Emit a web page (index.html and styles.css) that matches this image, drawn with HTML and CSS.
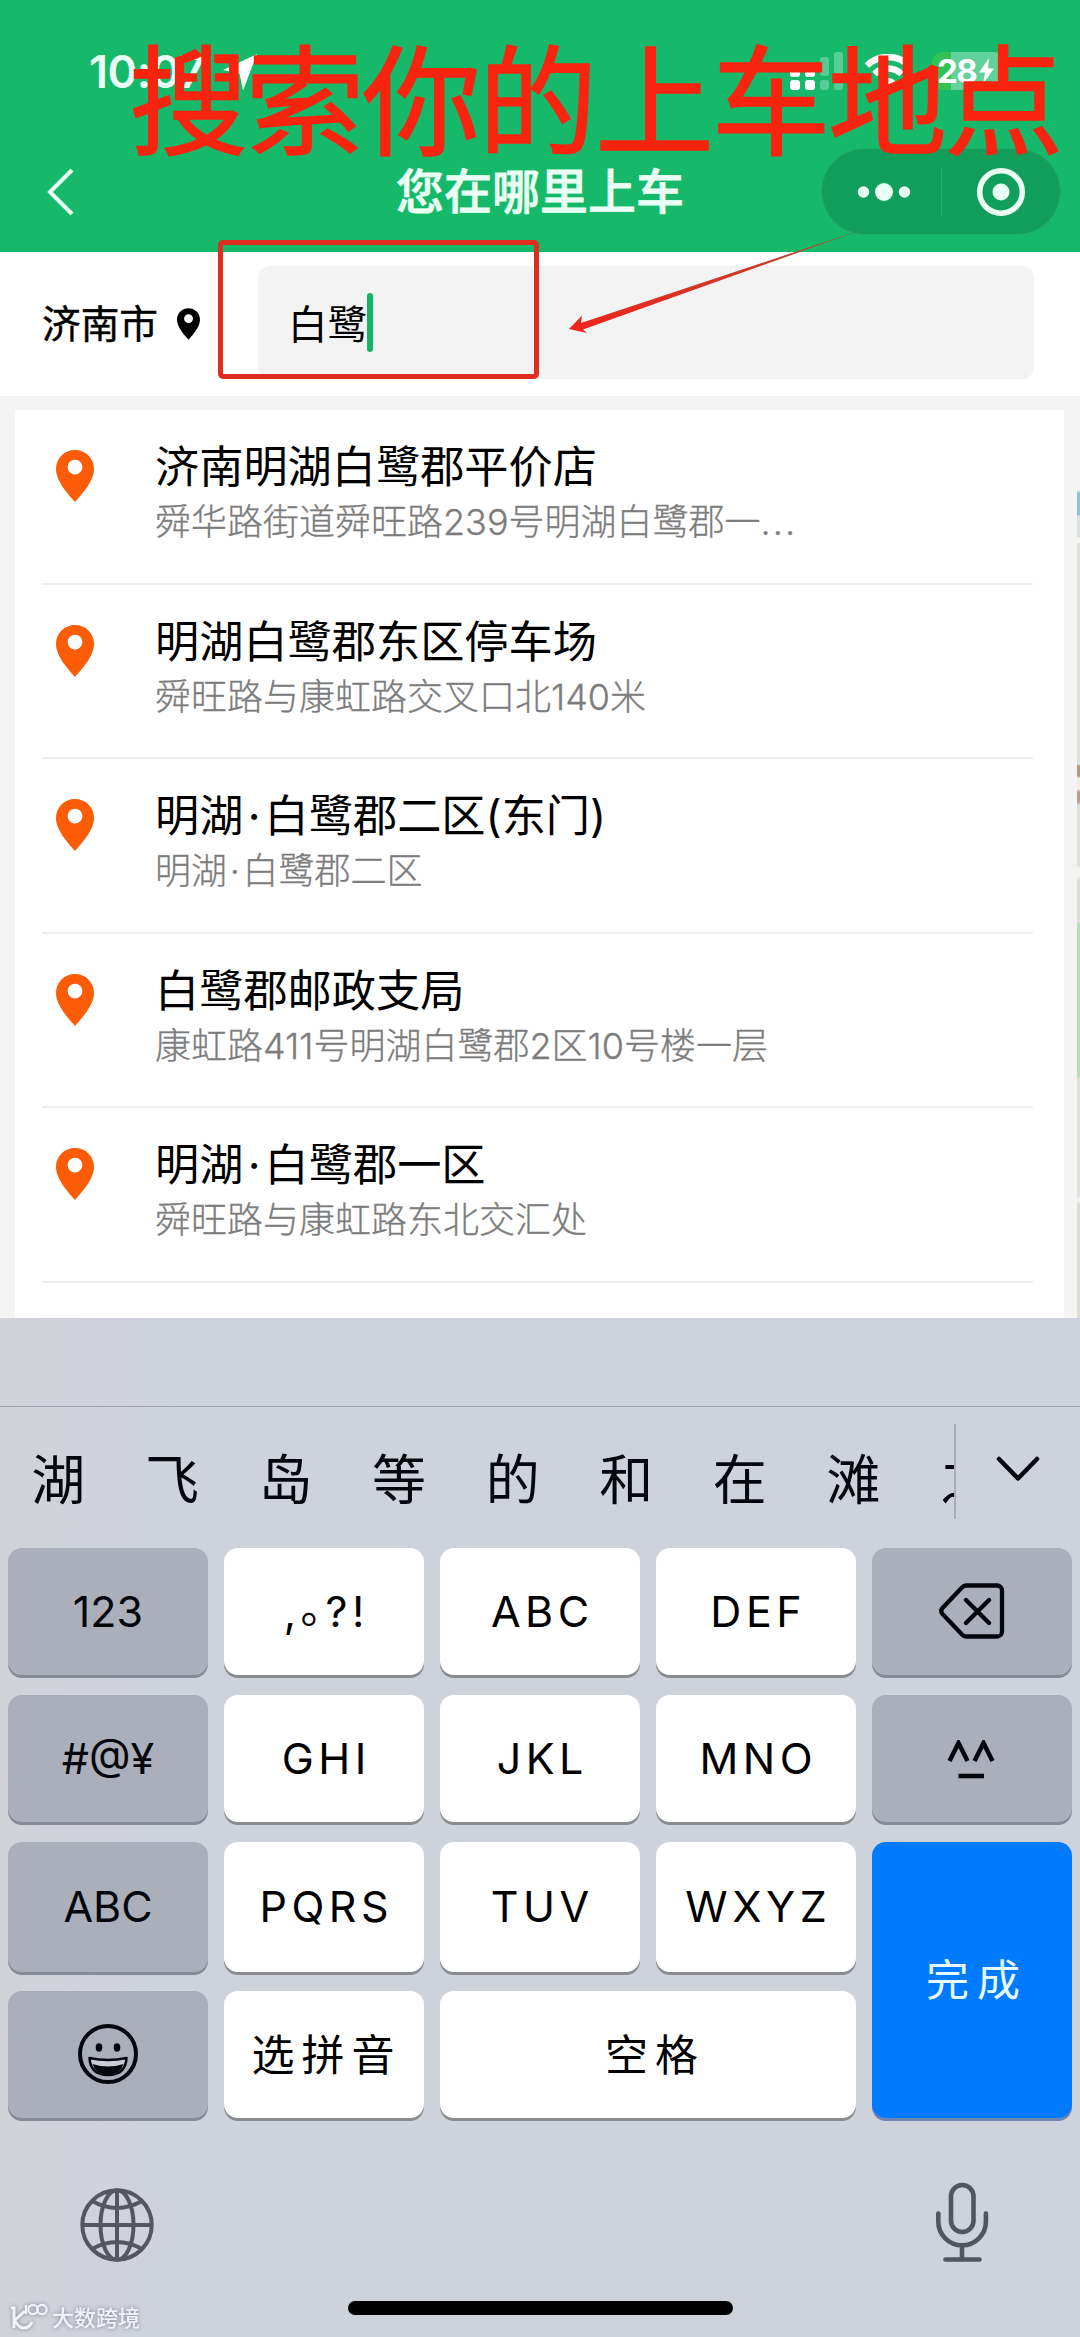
FILE: index.html
```html
<!DOCTYPE html>
<html lang="zh-CN">
<head>
<meta charset="utf-8">
<title>您在哪里上车</title>
<link rel="stylesheet" href="styles.css">
</head>
<body>
<svg class="defs" width="0" height="0">
  <symbol id="pin" viewBox="0 0 38 52">
    <path fill-rule="evenodd" d="M19 0C8.500 0 0 8 0 19c0 13 14 27 19 33 5-6 19-20 19-33C38 8 29.500 0 19 0zm0 9.700a7.400 7.400 0 1 1 0 14.800 7.400 7.400 0 0 1 0-14.800z"/>
  </symbol>
</svg>
<div class="screen">
  <header class="header">
    <div class="status">
      <span class="clock">10:07</span>
      <svg class="locate" width="34" height="37" viewBox="0 0 34 37"><path fill="#fff" d="M34 0 20 36.500 16.500 19.500 0 16z"/></svg>
      <svg class="signal" width="54" height="40" viewBox="0 0 54 40">
        <g fill="#fff"><rect y="12" width="10" height="13" rx="3"/><rect x="15" y="12" width="10" height="13" rx="3"/><rect y="28" width="10" height="10" rx="3"/><rect x="15" y="28" width="10" height="10" rx="3"/></g>
        <g fill="#fff" opacity=".28"><rect x="30" y="5" width="9" height="19" rx="3"/><rect x="44" y="0" width="9" height="23" rx="3"/><rect x="30" y="28" width="9" height="10" rx="3"/><rect x="44" y="28" width="9" height="10" rx="3"/></g>
      </svg>
      <svg class="wifi" width="46" height="36" viewBox="0 0 46 36"><g fill="none" stroke="#fff" stroke-width="6.500"><path d="M2 11.500a30 30 0 0 1 42 0"/><path d="M9.500 20a19.500 19.500 0 0 1 27 0"/></g><path fill="#fff" d="M15.500 27a11 11 0 0 1 15 0L23 35z"/></svg>
      <span class="battery">28<svg width="15" height="26" viewBox="0 0 15 26"><path fill="#fff" d="M10 0 0 14.500h6L4 26l11-15.500H9z"/></svg></span>
    </div>
    <div class="nav">
      <svg class="back" width="30" height="50" viewBox="0 0 30 50"><path d="M26 3 4 25l22 22" fill="none" stroke="#e4fff1" stroke-width="4"/></svg>
      <h1 class="title">您在哪里上车</h1>
      <div class="capsule">
        <svg width="54" height="20" viewBox="0 0 54 20" fill="#e9fff4"><circle cx="6.500" cy="10" r="5.700"/><circle cx="27" cy="10" r="9"/><circle cx="47.500" cy="10" r="5.700"/></svg>
        <i class="capsule-line"></i>
        <svg width="50" height="50" viewBox="0 0 50 50"><circle cx="25" cy="25" r="21.300" fill="none" stroke="#e9fff4" stroke-width="5.500"/><circle cx="25" cy="25" r="8.500" fill="#e9fff4"/></svg>
      </div>
    </div>
  </header>

  <div class="search">
    <span class="city">济南市</span>
    <svg class="city-pin" width="23" height="32"><use href="#pin"/></svg>
    <div class="field"><span class="query">白鹭</span><i class="caret"></i></div>
  </div>

  <main class="results">
    <ul class="list">
      <li class="row"><svg class="pin" width="38" height="52"><use href="#pin"/></svg><div><p class="name">济南明湖白鹭郡平价店</p><p class="addr">舜华路街道舜旺路<span class="num">239</span>号明湖白鹭郡一<span class="dots">...</span></p></div></li>
      <li class="row"><svg class="pin" width="38" height="52"><use href="#pin"/></svg><div><p class="name">明湖白鹭郡东区停车场</p><p class="addr">舜旺路与康虹路交叉口北140米</p></div></li>
      <li class="row"><svg class="pin" width="38" height="52"><use href="#pin"/></svg><div><p class="name">明湖<span class="mid">·</span>白鹭郡二区(东门)</p><p class="addr">明湖<span class="mid">·</span>白鹭郡二区</p></div></li>
      <li class="row"><svg class="pin" width="38" height="52"><use href="#pin"/></svg><div><p class="name">白鹭郡邮政支局</p><p class="addr">康虹路411号明湖白鹭郡2区10号楼一层</p></div></li>
      <li class="row"><svg class="pin" width="38" height="52"><use href="#pin"/></svg><div><p class="name">明湖<span class="mid">·</span>白鹭郡一区</p><p class="addr">舜旺路与康虹路东北交汇处</p></div></li>
    </ul>
    <div class="map-edge"></div>
  </main>

  <section class="keyboard">
    <div class="accessory"></div>
    <div class="candidates">
      <div class="words"><span>湖</span><span>飞</span><span>岛</span><span>等</span><span>的</span><span>和</span><span>在</span><span>滩</span><span>之</span></div>
      <svg class="expand" width="46" height="28" viewBox="0 0 46 28"><path d="M4 4 23 23.500 42 4" fill="none" stroke="#05070c" stroke-width="4.500" stroke-linecap="round" stroke-linejoin="round"/></svg>
    </div>
    <div class="keys">
      <div class="key dark">123</div>
      <div class="key wide"><span class="punct">,<span class="stop">。</span>?!</span></div>
      <div class="key wide">ABC</div>
      <div class="key wide">DEF</div>
      <div class="key dark"><svg width="66" height="56" viewBox="0 0 66 56" fill="none" stroke="#05070c" stroke-width="4.300" stroke-linecap="round" stroke-linejoin="round"><path d="M27 2.500h31a5 5 0 0 1 5 5v41a5 5 0 0 1-5 5H27q-2 0-4-2L3.500 31q-2.500-3 0-6L23 4.500q2-2 4-2zM27 17l23 23M50 17 27 40"/></svg></div>
      <div class="key dark">#@¥</div>
      <div class="key wide">GHI</div>
      <div class="key wide">JKL</div>
      <div class="key wide">MNO</div>
      <div class="key dark face"><svg width="48" height="40" viewBox="0 0 48 40"><path d="M2.500 21 11.500 3 20.500 21M27.500 21 36.500 3 45.500 21M11.500 36H37" fill="none" stroke="#05070c" stroke-width="4.500"/></svg></div>
      <div class="key dark">ABC</div>
      <div class="key wide">PQRS</div>
      <div class="key wide">TUV</div>
      <div class="key wide">WXYZ</div>
      <div class="key done">完成</div>
      <div class="key dark smile"><svg width="62" height="62" viewBox="0 0 62 62"><circle cx="31" cy="31" r="28" fill="none" stroke="#05070c" stroke-width="4"/><ellipse cx="22" cy="24.500" rx="3.300" ry="4.200" fill="#05070c"/><ellipse cx="40" cy="24.500" rx="3.300" ry="4.200" fill="#05070c"/><path d="M12.500 35q18.500 4 37 0-1 17-18.500 17T12.500 35z" fill="#c9ccd2" stroke="#05070c" stroke-width="2.600" stroke-linejoin="round"/><path d="M15.500 41q15.500 5 31 0-3 10.500-15.500 10.500T15.500 41z" fill="#05070c"/></svg></div>
      <div class="key han">选拼音</div>
      <div class="key han space">空格</div>
    </div>
    <div class="tools">
      <svg class="globe" width="76" height="76" viewBox="0 0 76 76" fill="none" stroke="#55565f" stroke-width="4"><circle cx="38" cy="38" r="34.700"/><ellipse cx="38" cy="38" rx="16.500" ry="34.700"/><path d="M38 3v70M3 38h70M13 14q25 14 50 0M13 62q25-14 50 0"/></svg>
      <svg width="54" height="80" viewBox="0 0 54 80" fill="none" stroke="#51555f" stroke-width="4.600" stroke-linecap="round"><rect x="16" y="3" width="22.500" height="47" rx="11.200"/><path d="M3.300 31.500v8a23.800 23.800 0 0 0 47.600 0v-8M27 63.500v14M10.500 77.500h34"/></svg>
    </div>
    <div class="home"></div>
    <div class="watermark">
      <svg width="38" height="28" viewBox="0 0 38 28" fill="none" stroke="#f1f3f8" stroke-width="3"><path d="M1 6h3v20M15 9 5 18q3 8 9 8 5 0 8-6"/><g stroke-width="2.200"><path d="M16 3v9"/><circle cx="23" cy="7.500" r="4.700"/><circle cx="32" cy="7.500" r="4.700"/></g></svg>
      <span>大数跨境</span>
    </div>
  </section>

  <div class="note">搜索你的上车地点</div>
  <div class="frame"></div>
  <svg class="arrow" width="310" height="120" viewBox="0 0 310 120"><defs><linearGradient id="fade" x1="0" x2="1"><stop offset="0" stop-color="#f1251b"/><stop offset=".65" stop-color="#c93a2a"/><stop offset="1" stop-color="#6d7343"/></linearGradient></defs><path fill="url(#fade)" d="M4 105 17 91.500 16 99 302 4 18 105.500 22 109z"/></svg>
</div>
</body>
</html>
```
FILE: styles.css
```css
* { box-sizing: border-box; margin: 0; padding: 0; }
body { width: 1080px; background: #fff; font-family: Inter, "Noto Sans CJK SC", sans-serif; color: #000; }
svg { display: block; flex: none; }
.defs { position: absolute; }
.screen { position: relative; width: 1080px; height: 2337px; overflow: hidden; display: flex; flex-direction: column; }

.header { height: 252px; background: #16b96a; flex: none; }
.status { height: 148px; padding: 52px 0 0 89px; display: flex; align-items: flex-start; color: #e9fff4; }
.clock { width: 134px; font-size: 45px; font-weight: 600; line-height: 40px; letter-spacing: -.5px; }
.locate { margin-top: 2px; }
.signal { margin-left: 533px; }
.wifi { margin-left: 21px; margin-top: 2px; }
.battery { margin-left: 21px; width: 73px; height: 38px; border-radius: 11px; padding-left: 5px; display: flex; align-items: center; gap: 3px; background: linear-gradient(90deg, #31c252 19px, #62d19b 19px); font-size: 33px; font-weight: 700; letter-spacing: -1.500px; color: #fff; }
.nav { height: 86px; display: grid; grid-template-columns: 310px 1fr 310px; align-items: center; }
.back { margin-left: 46px; }
.title { text-align: center; font-size: 48px; font-weight: 500; line-height: 86px; color: #e9fff4; -webkit-text-stroke: .8px #e9fff4; white-space: nowrap; }
.capsule { width: 240px; height: 87px; margin-left: 51px; border-radius: 44px; background: #119e5a; border: 1px solid #23ad6a; display: flex; align-items: center; padding: 0 34px 0 35px; }
.capsule-line { width: 2px; height: 50px; margin: 0 34px 0 30px; background: #2aac6c; }

.search { height: 144px; flex: none; margin-right: 5px; padding-left: 42px; display: flex; align-items: center; background: #fff; }
.city { font-size: 38.700px; line-height: 52px; width: 135px; -webkit-text-stroke: .4px #000; }
.city-pin { margin-top: -1px; fill: #000; }
.field { margin: 0 0 3px 58px; width: 776px; height: 113px; border-radius: 12px; background: #f3f3f3; padding-left: 30px; display: flex; align-items: center; font-size: 39.500px; }
.query { padding-bottom: 2px; }
.caret { width: 6px; height: 59px; border-radius: 3px; background: #14b56a; }

.results { height: 922px; flex: none; display: grid; grid-template-columns: 1fr 3px; background: #f4f4f4; overflow: hidden; }
.list { list-style: none; margin: 14px 13px 0 15px; background: #fff; padding: 0 31px 0 27px; }
.row { height: 174.500px; padding: 25px 0 0 14px; display: flex; border-bottom: 2.500px solid #eee; }
.pin { margin: 15px 61px 0 0; fill: #fc5c05; }
.name { font-size: 44.200px; line-height: 64px; white-space: nowrap; }
.addr { font-size: 36px; line-height: 46px; font-weight: 300; color: #7c7c7c; -webkit-text-stroke: .3px #7c7c7c; white-space: nowrap; }
.mid { display: inline-block; width: .48em; text-align: center; }
.addr .mid { width: .43em; }
.dots { letter-spacing: 2px; }
.map-edge { background: linear-gradient(#f4f4f4 94px, #8dc6d3 97px 119px, #dde1de 120px 141px, #f7f7f5 142px 146px, #dbe2dc 148px 368px, #b49a7c 370px 380px, #f3eede 382px 393px, #bd9c8c 396px 406px, #dfe0dc 409px 470px, #f5f6f3 472px 480px, #dedcd8 483px 526px, #b7e0b6 528px 680px, #dfdfd7 684px 800px, #f5f6f1 802px 805px, #dcdcd2 808px); }

.keyboard { flex: 1; background: linear-gradient(90deg, #d1d3d9, #ced2db 180px); display: flex; flex-direction: column; }
.accessory { height: 89px; border-bottom: 1.500px solid #9fa1aa; }
.candidates { height: 141px; display: flex; padding-top: 17px; }
.words { width: 956px; height: 95px; border-right: 2px solid #abadb5; overflow: hidden; display: flex; }
.words span { flex: 0 0 113.600px; padding-left: 3px; text-align: center; font-size: 54px; line-height: 114px; color: #05070c; }
.expand { margin: 31px 0 0 39px; }
.keys { display: grid; grid-template-columns: repeat(5, 200px); grid-template-rows: 127px 127.500px 130px 127px; gap: 19.500px 16px; padding: 0 8px; }
.key { border-radius: 14px; background: #fff; box-shadow: 0 3px 0 #8a8b8f; display: flex; align-items: center; justify-content: center; padding-bottom: 1px; font-size: 43px; white-space: nowrap; }
.dark { background: #abafba; box-shadow: 0 3px 0 #878b95; color: #05070c; }
.wide { letter-spacing: 4.500px; padding-left: 4.500px; }
.han { letter-spacing: 7px; padding: 0 0 5px 5px; }
.space { grid-column: span 2; padding-left: 14px; }
.face { padding: 3px 2px 0 0; }
.smile { padding: 0 0 2px; }
.done { grid-column: 5; grid-row: 3 / span 2; background: #007aff; box-shadow: 0 3px 0 #6e86ad; color: #e6faff; letter-spacing: 8px; padding: 0 0 5px 10px; }
.punct { line-height: 52px; }
.stop { display: inline-block; width: 25px; height: 20px; line-height: 20px; vertical-align: 4px; }
.tools { display: flex; justify-content: space-between; padding: 64px 91px 0 79px; height: 183px; }
.globe { margin-top: 5px; }
.home { width: 385px; height: 14px; border-radius: 7px; background: #000; margin-left: 348px; }
.watermark { position: absolute; left: 10px; top: 2301px; display: flex; align-items: center; gap: 4px; color: #f1f3f8; font: 500 22px/30px "Noto Sans CJK SC", sans-serif; filter: drop-shadow(0 0 2px #7d828e); }

.note { position: absolute; left: 129px; top: 9px; font: 400 119px/170px "Noto Sans CJK SC", sans-serif; letter-spacing: -2.500px; color: #f92410; -webkit-text-stroke: 1.500px #f92410; white-space: nowrap; }
.frame { position: absolute; left: 218px; top: 240px; width: 321px; height: 139px; border: 5.500px solid #df2d20; border-radius: 5px; }
.arrow { position: absolute; left: 565px; top: 224px; }
```
